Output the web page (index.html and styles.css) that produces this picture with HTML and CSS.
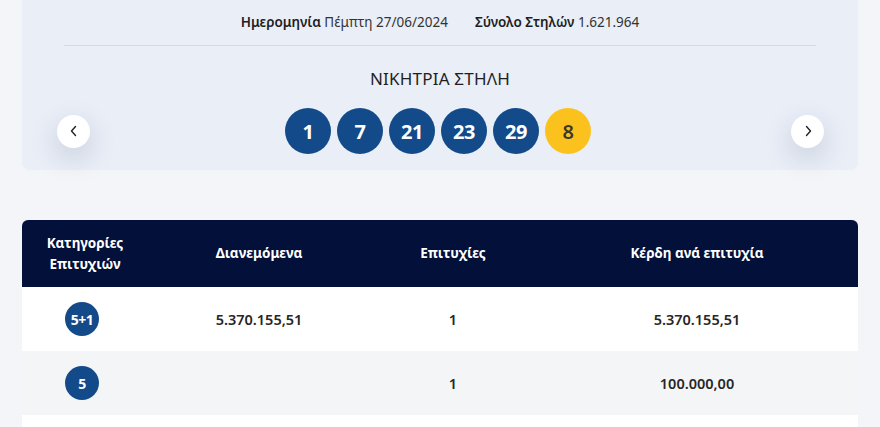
FILE: index.html
```html
<!DOCTYPE html>
<html lang="el">
<head>
<meta charset="utf-8">
<title>Κλήρωση</title>
<link rel="stylesheet" href="styles.css">
</head>
<body>
<div class="page">
  <section class="draw">
    <div class="meta">
      <span class="meta-item"><b>Ημερομηνία</b> Πέμπτη 27/06/2024</span>
      <span class="meta-item"><b>Σύνολο Στηλών</b> 1.621.964</span>
    </div>
    <hr class="divider">
    <h2 class="win-title">ΝΙΚΗΤΡΙΑ ΣΤΗΛΗ</h2>
    <div class="ball-row">
      <button class="nav-btn" aria-label="Προηγούμενη">
        <svg width="10" height="12" viewBox="0 0 10 12"><path d="M6.5 1.5 L2.5 6 L6.5 10.5" fill="none" stroke="#222" stroke-width="1.4" stroke-linecap="round" stroke-linejoin="round"/></svg>
      </button>
      <div class="balls">
        <span class="ball">1</span>
        <span class="ball">7</span>
        <span class="ball">21</span>
        <span class="ball">23</span>
        <span class="ball">29</span>
        <span class="ball bonus">8</span>
      </div>
      <button class="nav-btn" aria-label="Επόμενη">
        <svg width="10" height="12" viewBox="0 0 10 12"><path d="M3.5 1.5 L7.5 6 L3.5 10.5" fill="none" stroke="#222" stroke-width="1.4" stroke-linecap="round" stroke-linejoin="round"/></svg>
      </button>
    </div>
  </section>

  <section class="results">
    <div class="row head">
      <div class="cell">Κατηγορίες<br>Επιτυχιών</div>
      <div class="cell">Διανεμόμενα</div>
      <div class="cell">Επιτυχίες</div>
      <div class="cell">Κέρδη ανά επιτυχία</div>
    </div>
    <div class="row">
      <div class="cell"><span class="badge">5+1</span></div>
      <div class="cell">5.370.155,51</div>
      <div class="cell">1</div>
      <div class="cell">5.370.155,51</div>
    </div>
    <div class="row alt">
      <div class="cell"><span class="badge">5</span></div>
      <div class="cell"></div>
      <div class="cell">1</div>
      <div class="cell">100.000,00</div>
    </div>
    <div class="row"></div>
  </section>
</div>
</body>
</html>
```
FILE: styles.css
```css
* { box-sizing: border-box; }
html, body { margin: 0; padding: 0; }
body {
  background: #f4f5f8;
  font-family: "Noto Sans", "Open Sans", "DejaVu Sans", sans-serif;
  color: #222;
  overflow: hidden;
}
.page {
  padding: 0 22px 40px;
}
.draw {
  margin-top: -20px;
  padding: 32px 0 16px;
  background: #e9eef7;
  border-radius: 8px;
}
.meta {
  display: flex;
  justify-content: center;
  gap: 27px;
  font-size: 13.5px;
  line-height: 20px;
  color: #333;
}
.meta b { font-weight: 600; color: #1e1e1e; }
.divider {
  margin: 13px 42px 0 42px;
  border: 0;
  border-top: 1px solid #d5dbe6;
  height: 0;
}
.win-title {
  margin: 22px 0 0;
  text-align: center;
  font-size: 17px;
  line-height: 22px;
  font-weight: 400;
  color: #1f1f1f;
  letter-spacing: 0.2px;
}
.ball-row {
  margin-top: 18px;
  display: flex;
  align-items: center;
  justify-content: space-between;
  padding: 0 34px 0 35px;
}
.nav-btn {
  width: 33px;
  height: 33px;
  border-radius: 50%;
  border: 0;
  background: #fff;
  display: flex;
  align-items: center;
  justify-content: center;
  padding: 0;
  box-shadow: 0 10px 28px rgba(40, 50, 90, 0.18);
}
.balls {
  display: flex;
  gap: 6px;
  margin-right: 5px;
}
.ball {
  width: 46px;
  height: 46px;
  border-radius: 50%;
  background: #134a89;
  color: #fff;
  display: flex;
  align-items: center;
  justify-content: center;
  font-size: 20px;
  font-weight: 700;
  letter-spacing: -0.5px;
}
.ball.bonus {
  background: #fbc21d;
  color: #3a3a2a;
  font-weight: 600;
}
.results {
  margin-top: 50px;
  background: #fff;
  border-radius: 6px 6px 0 0;
  overflow: hidden;
}
.row {
  display: grid;
  grid-template-columns: 126px 222px 166px 1fr;
  height: 64px;
  align-items: center;
  background: #fff;
}
.row.alt { background: #f4f5f7; }
.row.head {
  height: 67px;
  background: #02103a;
  color: #fff;
}
.cell {
  text-align: center;
  font-size: 14.5px;
  font-weight: 600;
  color: #262626;
}
.head .cell {
  color: #fff;
  font-size: 13.5px;
  font-weight: 700;
  line-height: 21px;
}
.badge {
  display: inline-flex;
  width: 34px;
  height: 34px;
  border-radius: 50%;
  background: #134a89;
  color: #fff;
  align-items: center;
  justify-content: center;
  font-size: 14px;
  font-weight: 700;
  letter-spacing: -0.5px;
  margin-left: -6px;
}
```
